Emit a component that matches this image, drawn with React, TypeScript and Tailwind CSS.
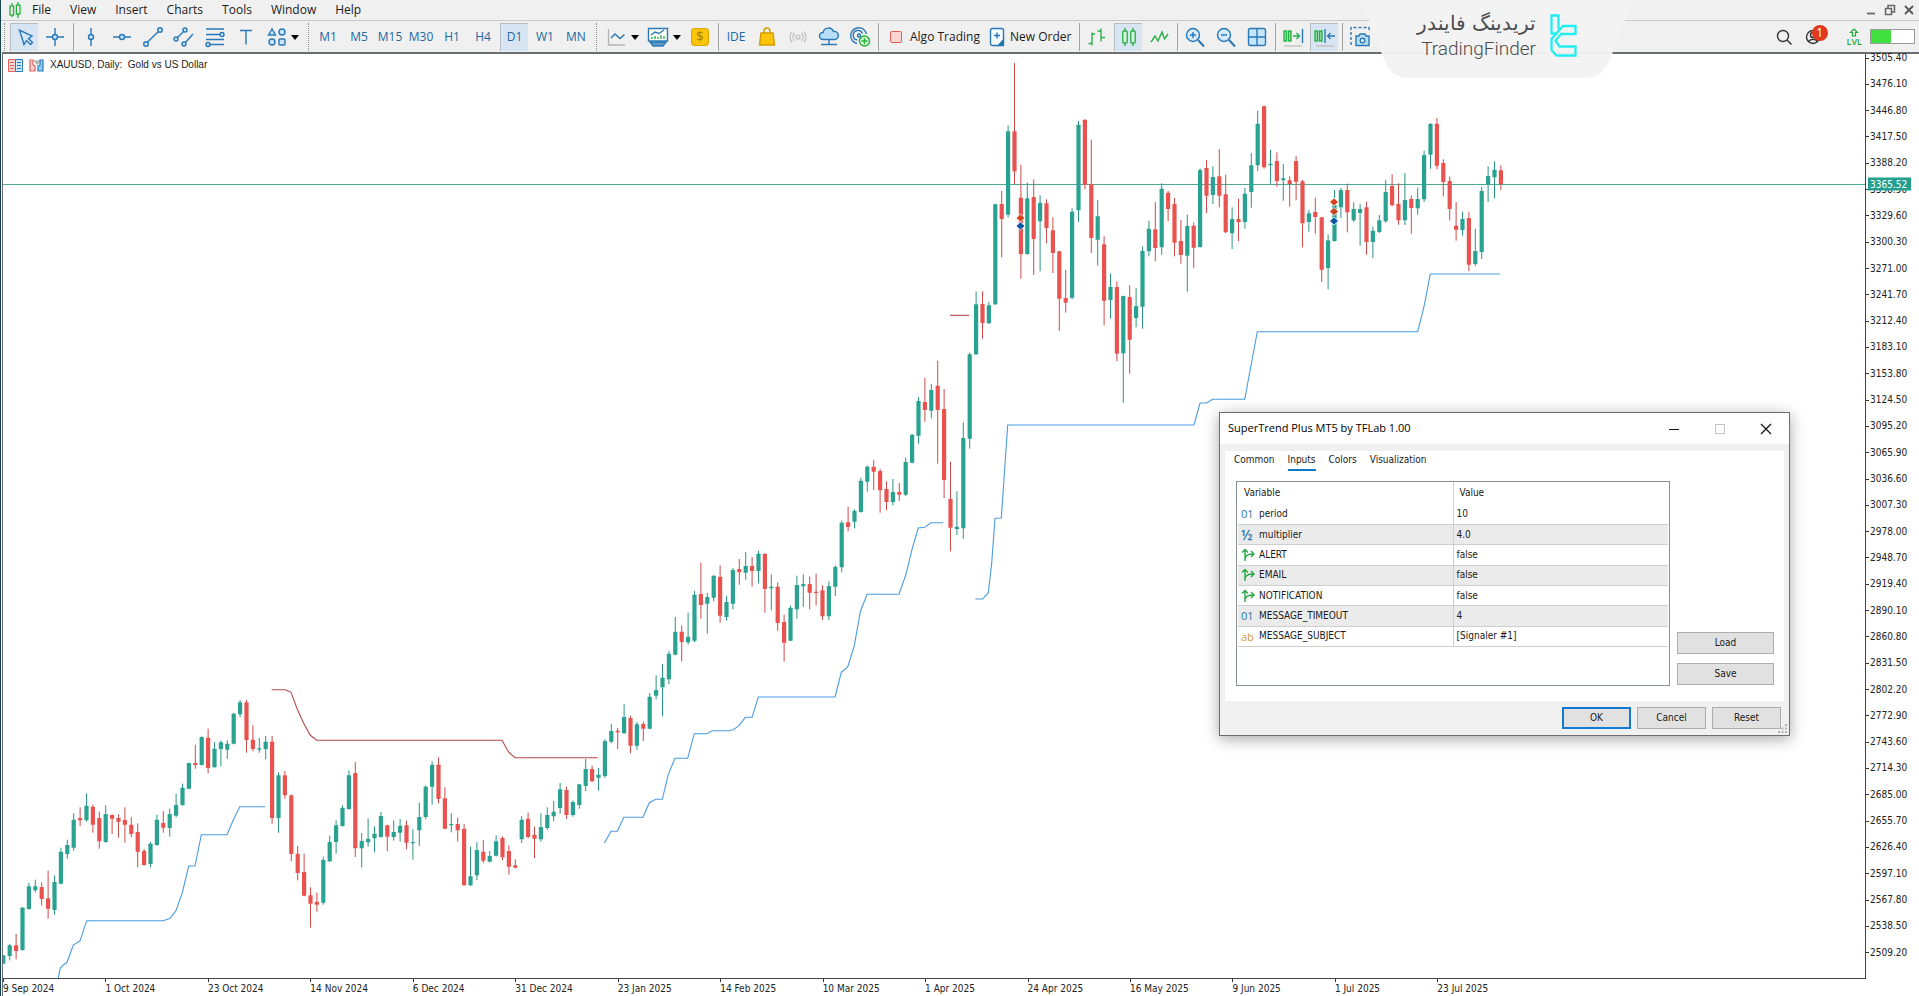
import React from "react";

type Bar = ["G" | "R", number, number, number, number];
type Run = { base: number; bars: Bar[] };

/* Candles from left to right, in thirds of a pixel below each run's base: direction, high, body top, body bottom, low. */
const runs: Run[] = [
  {
    base: 680,
    bars: [
      ["G", 826, 826, 851, 851], ["G", 792, 796, 828, 841], ["R", 762, 796, 813, 838], ["G", 681, 683, 810, 812],
      ["G", 609, 619, 687, 689], ["G", 599, 619, 631, 637], ["R", 607, 621, 657, 677], ["R", 572, 655, 686, 716],
      ["G", 586, 606, 690, 704], ["G", 503, 515, 611, 613], ["G", 479, 495, 522, 536], ["G", 400, 419, 503, 512],
      ["R", 382, 414, 421, 438], ["G", 340, 377, 421, 425], ["R", 374, 380, 434, 458], ["R", 395, 414, 484, 506],
      ["G", 376, 402, 486, 488], ["R", 403, 405, 416, 462], ["R", 403, 414, 425, 473], ["R", 382, 420, 434, 488],
      ["R", 412, 434, 462, 471], ["R", 430, 456, 515, 562], ["R", 507, 513, 555, 557], ["G", 486, 491, 552, 562],
      ["G", 404, 419, 495, 497], ["R", 393, 429, 443, 458], ["G", 386, 402, 444, 470], ["G", 341, 375, 407, 412],
      ["G", 311, 323, 375, 377], ["G", 248, 249, 326, 328], ["R", 194, 249, 255, 266], ["G", 169, 171, 255, 256],
      ["R", 146, 173, 264, 279], ["G", 186, 206, 262, 263], ["G", 182, 187, 207, 259], ["G", 181, 191, 209, 236],
      ["G", 99, 101, 191, 193], ["G", 60, 67, 103, 111], ["R", 60, 67, 180, 218], ["R", 136, 179, 207, 214],
      ["G", 174, 205, 209, 218], ["G", 168, 185, 207, 238], ["R", 168, 185, 414, 431], ["G", 277, 286, 414, 458],
      ["R", 273, 286, 346, 356], ["R", 343, 346, 522, 544], ["R", 498, 521, 579, 601], ["R", 521, 576, 647, 649],
      ["R", 622, 646, 671, 743], ["R", 638, 665, 674, 695], ["G", 530, 540, 668, 674], ["G", 467, 486, 544, 546],
      ["G", 421, 436, 486, 521], ["G", 376, 383, 438, 440], ["G", 271, 286, 387, 389], ["R", 246, 279, 505, 531],
      ["G", 459, 483, 505, 562], ["G", 415, 476, 487, 500], ["G", 439, 461, 475, 517], ["G", 396, 408, 471, 473],
      ["R", 434, 436, 470, 514], ["G", 421, 456, 471, 482], ["G", 417, 437, 458, 485], ["R", 422, 436, 488, 508],
      ["G", 448, 486, 490, 539], ["G", 368, 411, 451, 498], ["G", 316, 320, 411, 418], ["G", 244, 254, 320, 374],
      ["R", 232, 254, 357, 370], ["R", 322, 355, 446, 448], ["G", 400, 432, 436, 457], ["R", 413, 432, 451, 485],
      ["R", 432, 446, 616, 617], ["G", 500, 589, 616, 618], ["G", 486, 510, 586, 600], ["R", 480, 515, 542, 549],
      ["G", 513, 528, 545, 547], ["G", 466, 484, 527, 529], ["R", 469, 474, 532, 541], ["R", 496, 513, 560, 584],
      ["R", 538, 556, 563, 565], ["G", 409, 419, 478, 489], ["R", 398, 416, 471, 475], ["R", 440, 464, 476, 534],
      ["G", 400, 441, 478, 485], ["G", 382, 405, 444, 450], ["G", 363, 395, 409, 424], ["G", 309, 328, 384, 401],
      ["R", 320, 330, 405, 417], ["G", 361, 366, 405, 410], ["G", 312, 313, 375, 386], ["G", 237, 267, 318, 333],
      ["R", 257, 267, 304, 306], ["G", 264, 284, 293, 332], ["G", 178, 183, 288, 294], ["G", 131, 153, 185, 190],
      ["R", 144, 152, 157, 207], ["G", 72, 111, 160, 161], ["R", 107, 114, 197, 220], ["G", 126, 133, 197, 209],
      ["R", 124, 132, 146, 183], ["G", 39, 50, 146, 148],
    ],
  },
  {
    base: 480,
    bars: [
      ["G", 586, 630, 647, 658], ["G", 552, 593, 622, 709], ["G", 513, 521, 598, 613], ["G", 411, 455, 524, 526],
      ["R", 436, 455, 486, 544], ["G", 398, 470, 487, 493], ["G", 333, 344, 482, 486], ["R", 248, 342, 375, 416],
      ["G", 339, 351, 371, 461], ["G", 286, 287, 353, 364], ["R", 256, 290, 407, 428], ["G", 348, 366, 411, 422],
      ["G", 264, 270, 371, 388], ["R", 237, 267, 277, 314], ["G", 216, 258, 278, 299], ["R", 231, 258, 273, 320],
      ["G", 212, 221, 273, 310], ["R", 220, 221, 327, 398], ["G", 283, 320, 325, 391], ["R", 307, 320, 429, 452],
      ["R", 404, 426, 488, 545], ["G", 377, 383, 482, 483], ["G", 287, 315, 388, 416], ["G", 283, 312, 319, 380],
      ["R", 290, 312, 338, 388], ["R", 281, 335, 339, 376], ["R", 316, 331, 409, 420], ["G", 304, 318, 409, 420],
      ["G", 256, 261, 320, 348], ["G", 122, 128, 262, 277], ["R", 80, 127, 141, 154], ["G", 88, 93, 125, 145],
    ],
  },
  {
    base: 300,
    bars: [
      ["G", 533, 542, 636, 638], ["G", 496, 500, 545, 575], ["R", 480, 500, 515, 570], ["R", 507, 513, 571, 638],
      ["R", 544, 567, 606, 630], ["G", 537, 576, 606, 616], ["R", 549, 576, 584, 603], ["G", 473, 486, 584, 588],
      ["G", 402, 404, 488, 490], ["G", 291, 303, 407, 431], ["R", 234, 306, 330, 365], ["G", 252, 270, 332, 355],
      ["R", 182, 257, 330, 491], ["R", 267, 327, 540, 594], ["R", 486, 597, 683, 754], ["G", 574, 680, 687, 705],
      ["G", 367, 414, 685, 716], ["G", 158, 163, 416, 446],
    ],
  },
  {
    base: 50,
    bars: [
      ["G", 724, 763, 913, 915], ["R", 724, 762, 819, 866], ["G", 756, 766, 820, 822], ["G", 461, 463, 763, 765],
      ["R", 423, 462, 507, 622], ["G", 226, 244, 494, 502], ["R", 39, 244, 364, 402], ["R", 344, 443, 612, 686],
      ["G", 398, 445, 612, 614], ["R", 388, 441, 567, 675], ["G", 436, 458, 514, 664], ["R", 448, 460, 534, 580],
      ["R", 502, 541, 609, 669], ["R", 603, 604, 746, 843], ["R", 660, 744, 758, 788], ["G", 475, 485, 743, 747],
      ["G", 213, 224, 481, 516], ["R", 208, 209, 404, 418], ["R", 269, 402, 564, 609], ["G", 450, 499, 569, 647],
      ["R", 559, 583, 752, 826], ["G", 670, 711, 750, 806], ["R", 694, 711, 911, 934], ["G", 737, 738, 910, 1058],
      ["R", 706, 741, 869, 971], ["G", 714, 768, 804, 832], ["G", 589, 603, 770, 836], ["G", 512, 536, 604, 619],
      ["R", 456, 538, 594, 634], ["G", 400, 416, 592, 614], ["R", 423, 428, 477, 513], ["R", 444, 462, 578, 619],
      ["R", 510, 573, 615, 641], ["G", 494, 528, 617, 725], ["R", 517, 527, 593, 654], ["G", 355, 360, 591, 593],
      ["R", 330, 354, 437, 489], ["G", 349, 381, 435, 462], ["R", 297, 379, 437, 472], ["R", 374, 433, 547, 549],
      ["G", 472, 507, 550, 597], ["R", 446, 507, 516, 573], ["G", 414, 431, 516, 536], ["G", 310, 346, 426, 473],
    ],
  },
  {
    base: 90,
    bars: [
      ["G", 62, 101, 226, 243], ["R", 47, 49, 232, 236], ["G", 180, 221, 226, 281], ["R", 187, 213, 273, 290],
      ["G", 222, 265, 271, 332], ["R", 259, 271, 282, 350], ["R", 198, 213, 275, 331], ["R", 270, 274, 400, 472],
      ["G", 360, 370, 396, 425], ["R", 323, 366, 381, 431], ["R", 381, 382, 539, 576], ["G", 433, 451, 534, 598],
      ["G", 300, 345, 453, 455], ["G", 294, 300, 352, 384], ["R", 281, 300, 367, 427], ["G", 337, 357, 391, 396],
      ["G", 342, 357, 369, 467], ["R", 335, 352, 456, 494], ["G", 411, 422, 456, 504], ["G", 375, 391, 426, 429],
      ["G", 270, 306, 394, 398], ["R", 253, 288, 346, 349], ["R", 280, 342, 391, 404], ["G", 249, 330, 391, 405],
      ["R", 316, 327, 354, 431], ["G", 293, 327, 355, 374], ["G", 182, 195, 328, 336], ["G", 99, 102, 194, 236],
      ["R", 84, 101, 227, 238], ["R", 208, 219, 276, 319], ["R", 259, 273, 357, 391], ["R", 336, 407, 419, 452],
      ["G", 365, 387, 420, 437], ["R", 365, 384, 524, 544], ["G", 416, 483, 522, 528], ["G", 291, 303, 486, 507],
      ["G", 229, 258, 282, 336], ["G", 214, 239, 262, 325], ["R", 226, 241, 282, 301],
    ],
  },
];

const candles = runs.flatMap((run) =>
  run.bars.map(([dir, ...ys]) => ({ dir, ys: ys.map((v) => run.base + v / 3) })),
);

const upTrend = [
  "58.3,978 60.3,968 63.7,964.7 67,962.3 73.3,945 80,941 86.7,920.7 163.3,920.7 170,918.3 176,910.7 182.3,892.7 188.7,866 195,866 201.3,834.7 227,834.7 233.3,820 239.7,806.7 265,806.7",
  "604.3,843.3 611,831.3 617.3,831.3 623.7,817.3 643,817.3 649.3,802.7 655.7,799.3 662.3,799.3 668.3,774.3 675,758.3 687.7,758.3 694.3,733.7 706.7,733.7 712.3,730.7 728.3,730.7 733.3,729.7 739,725.7 745.3,717.3 752,717.3 758.3,697 835,697 841.3,672.3 847.7,667 854.3,645.7 860.3,611.7 867,594.3 899,594.3 905.7,575.3 912,549.3 918.3,528 924.7,527.3 931,522.7 943.3,522.7",
  "975.3,599 982.7,599 988.3,592.7 991.7,563.3 995,518.3 1001.3,518 1007.7,425 1194,425 1200,403 1206.5,403 1212.7,399.3 1244.7,399.3 1257.3,331.7 1417.7,331.7 1424,306.7 1430.3,274 1500,274",
];
const downTrend = [
  "271.7,689.7 285.3,689.7 291,692.3 297.3,709.3 303.7,723.3 310.3,735.3 316.7,740.3 502,740.3 508.3,751.7 515,757.7 597.7,757.7",
  "950,315.3 969,315.3",
];
const signals = [
  { x: 1020.5, y: 218, c: "#d8431c" },
  { x: 1020.5, y: 226, c: "#0a56a4" },
  { x: 1334, y: 202, c: "#d8431c" },
  { x: 1334, y: 211.5, c: "#c8401c" },
  { x: 1334, y: 221, c: "#0a56a4" },
];
const prices = Array.from({ length: 35 }, (_, i) => (3505.4 - i * 29.3).toFixed(2));
const dates = [
  "9 Sep 2024", "1 Oct 2024", "23 Oct 2024", "14 Nov 2024", "6 Dec 2024", "31 Dec 2024", "23 Jan 2025", "14 Feb 2025",
  "10 Mar 2025", "1 Apr 2025", "24 Apr 2025", "16 May 2025", "9 Jun 2025", "1 Jul 2025", "23 Jul 2025",
];

function Icon({ children, w = 22, h = 22, stroke = "#2a78b5", sw = 1.4, fill = "none" }: {
  children: React.ReactNode; w?: number; h?: number; stroke?: string; sw?: number; fill?: string;
}) {
  return (
    <svg width={w} height={h} viewBox={`0 0 ${w} ${h}`} fill={fill} stroke={stroke} strokeWidth={sw} className="shrink-0" aria-hidden="true">
      {children}
    </svg>
  );
}

function Tool({ label, active, wide, children }: { label: string; active?: boolean; wide?: boolean; children: React.ReactNode }) {
  return (
    <button
      type="button"
      aria-label={label}
      className={`flex h-7 shrink-0 items-center justify-center ${wide ? "w-[39px]" : "w-7"} ${active ? "border-l border-t border-[#b4bcc6] bg-[#d7e4f2]" : ""}`}
    >
      {children}
    </button>
  );
}

const Sep = () => <span className="h-7 w-[2px] shrink-0 border-r border-[#a3a3a3]" />;
const Grip = () => <span className="mx-[2px] h-7 w-[2px] shrink-0 border-r border-dotted border-[#909090]" />;
const Caret = () => (
  <svg width="8" height="5" viewBox="0 0 8 5" className="ml-1 mt-[2px] shrink-0" aria-hidden="true">
    <path d="M0 0h8L4 5z" fill="#000" />
  </svg>
);

const frames = ["M1", "M5", "M15", "M30", "H1", "H4", "D1", "W1", "MN"];

function Toolbar() {
  return (
    <div className="flex h-8 items-center gap-[3px] border-t border-[#c9c9c9] pr-1">
      <Grip />
      <Tool label="Cursor" active>
        <Icon><path d="M5.500 4l4.500 14.500 2.500-4 4 4 2-2-4-4 3.500-2.500z" fill="#d4eafa" /></Icon>
      </Tool>
      <Tool label="Crosshair">
        <Icon><path d="M11 2v6M11 14v6M2 11h6M14 11h6" /><circle cx="11" cy="11" r="2.500" fill="#c9e6fb" /></Icon>
      </Tool>
      <Sep />
      <Tool label="Vertical line">
        <Icon><path d="M11 2v6M11 14v6" /><circle cx="11" cy="11" r="2.500" fill="#c9e6fb" /></Icon>
      </Tool>
      <Tool label="Horizontal line">
        <Icon><path d="M2 11h6M14 11h6" /><circle cx="11" cy="11" r="2.500" fill="#c9e6fb" /></Icon>
      </Tool>
      <Tool label="Trend line">
        <Icon><path d="M5 16.500L17 5" /><circle cx="4" cy="18" r="2.300" fill="#c9e6fb" /><circle cx="18" cy="4" r="2.300" fill="#c9e6fb" /></Icon>
      </Tool>
      <Tool label="Channel">
        <Icon><path d="M3 13L11 5M12 17L20 8" /><circle cx="3" cy="13" r="2" fill="#c9e6fb" /><circle cx="12" cy="4" r="2" fill="#c9e6fb" /><circle cx="11" cy="18" r="2" fill="#c9e6fb" /></Icon>
      </Tool>
      <Tool label="Fibonacci">
        <Icon><path d="M2 3h18M2 8.500h14M2 13.500h18M6 18.500h14" /><circle cx="18" cy="8.500" r="2" fill="#c9e6fb" /><circle cx="4" cy="18.500" r="2" fill="#c9e6fb" /></Icon>
      </Tool>
      <Tool label="Text">
        <Icon><path d="M5 4.500h12M11 4.500v14" /></Icon>
      </Tool>
      <Tool label="Shapes" wide>
        <Icon w={20}>
          <path d="M5 3L1.500 9h7z" fill="#c9e6fb" /><circle cx="15" cy="6" r="3" fill="#c9e6fb" />
          <circle cx="5" cy="16" r="3" fill="#c9e6fb" /><rect x="12" y="13" width="6" height="6" rx="1" fill="#c9e6fb" />
        </Icon>
        <Caret />
      </Tool>
      <Grip />
      {frames.map((f) => (
        <button
          key={f}
          type="button"
          className={`flex h-7 w-7 shrink-0 items-center justify-center whitespace-nowrap text-[12px] text-[#1c689f] ${f === "D1" ? "border-l border-t border-[#b4bcc6] bg-[#d7e4f2]" : ""}`}
        >
          {f}
        </button>
      ))}
      <Grip />
      <Tool label="Chart type" wide>
        <Icon><path d="M3.500 3v16H20" stroke="#b5b5b5" /><path d="M6 12l4-4 5 4.500 4.500-4" /></Icon>
        <Caret />
      </Tool>
      <Tool label="Templates" wide>
        <Icon>
          <path d="M1.500 2.500h19V15h-19z" fill="#fff" /><path d="M3 16h16l-3 4H6z" fill="#5d9cc9" />
          <path d="M4 9l4-3 4 1.500 5-3.500" /><path d="M5 13v-2M8 13v-3M11 13v-2M14 13v-4M17 13v-3" stroke="#34b34a" />
        </Icon>
        <Caret />
      </Tool>
      <Tool label="Symbols">
        <span className="flex h-[18px] w-[18px] items-center justify-center rounded-[3px] border border-[#dca600] bg-[#fcc50c] text-[13px] leading-none text-[#a87500]">$</span>
      </Tool>
      <Sep />
      <Tool label="IDE"><span className="text-[12px] text-[#1c689f]">IDE</span></Tool>
      <Tool label="Market">
        <Icon stroke="#d59b00"><path d="M8 8V5a3 3 0 016 0v3" /><path d="M5 7h12l1.500 12h-15z" fill="#fcc50c" /></Icon>
      </Tool>
      <Tool label="Signals">
        <Icon stroke="#b9b9b9" sw={1.2}>
          <circle cx="11" cy="11" r="2" /><path d="M7.500 7a6 6 0 000 8M14.500 7a6 6 0 010 8M5 5.500a9 9 0 000 11M17 5.500a9 9 0 010 11" />
        </Icon>
      </Tool>
      <Tool label="Cloud">
        <Icon><path d="M5 13.500a3.500 3.500 0 010-7 5.500 5.500 0 0110.500-1 4 4 0 011.500 8z" fill="#b9e0fb" /><path d="M11 14v4M3 18.500h16M8.500 18.500h5" /></Icon>
      </Tool>
      <Tool label="Community">
        <Icon>
          <path d="M8 17.500A8 8 0 1117.500 8M8.500 14a4.800 4.800 0 115-6.500" /><circle cx="10" cy="9.500" r="1.500" />
          <circle cx="15.500" cy="15" r="5" fill="#d9f7dd" stroke="#25b03a" /><path d="M15.500 12v6M12.500 15h6" stroke="#25b03a" />
        </Icon>
      </Tool>
      <Sep />
      <button type="button" className="flex h-7 w-[102px] shrink-0 items-center gap-2 whitespace-nowrap pl-2 text-[12px] text-[#1b1b1b]">
        <span className="h-3 w-3 shrink-0 rounded-[2px] border border-[#e2605a] bg-[#fbd5d2]" />
        Algo Trading
      </button>
      <button type="button" className="flex h-7 w-[88px] shrink-0 items-center gap-[5px] whitespace-nowrap pl-[2px] text-[12px] text-[#1b1b1b]">
        <Icon w={16} h={20}><path d="M3.500 1.500h9a2 2 0 012 2V13l-5 5.500h-6a2 2 0 01-2-2v-13a2 2 0 012-2z" fill="#f4faff" /><path d="M14.500 13v5.500h-5z" fill="#1c689f" /><path d="M8 5.500v6M5 8.500h6" /></Icon>
        New Order
      </button>
      <Sep />
      <Tool label="Bar chart">
        <Icon stroke="#2bb04a"><path d="M6 6.500v13M2.500 17.500H6M6 8h3M15 2.500v13M11.500 5H15M15 11.500h4" /></Icon>
      </Tool>
      <Tool label="Candlesticks" active>
        <Icon stroke="#2bb04a"><path d="M7 2v3M7 17v3M15 2v3M15 17v3" /><rect x="4.800" y="5" width="4.400" height="12" rx="1" fill="#d8f5dd" /><rect x="12.800" y="5" width="4.400" height="12" rx="1" fill="#d8f5dd" /></Icon>
      </Tool>
      <Tool label="Line chart">
        <Icon stroke="#2bb04a"><path d="M3 16l4-6 3 5 4-9 2.500 7L20 8" /></Icon>
      </Tool>
      <Sep />
      <Tool label="Zoom in">
        <Icon><path d="M14 14l6 6.500" strokeWidth="2" /><circle cx="9" cy="9" r="6.500" fill="#d3ebfc" /><path d="M9 6v6M6 9h6" /></Icon>
      </Tool>
      <Tool label="Zoom out">
        <Icon><path d="M14 14l6 6.500" strokeWidth="2" /><circle cx="9" cy="9" r="6.500" fill="#d3ebfc" /><path d="M6 9h6" /></Icon>
      </Tool>
      <Tool label="Tile windows">
        <Icon><rect x="2.500" y="2.500" width="17" height="17" rx="2" fill="#c5e5fb" /><path d="M11 2.500v17M2.500 11h17" /></Icon>
      </Tool>
      <Sep />
      <Tool label="Auto scroll">
        <Icon stroke="#2bb04a"><rect x="2" y="5" width="2.500" height="10" fill="#9be0a8" /><rect x="6.500" y="5" width="2.500" height="10" fill="#9be0a8" /><path d="M11 10h6M14.500 7l3 3-3 3" /><path d="M20.500 3v14" stroke="#2a78b5" /><path d="M2 20h18" stroke="#c0c0c0" /></Icon>
      </Tool>
      <Tool label="Chart shift" active>
        <Icon stroke="#2bb04a"><rect x="1" y="5" width="2.500" height="10" fill="#9be0a8" /><rect x="5.500" y="5" width="2.500" height="10" fill="#9be0a8" /><path d="M11 3v14M21 10h-7M16.500 7l-3 3 3 3" stroke="#2a78b5" /><path d="M2 20h18" stroke="#c0c0c0" /></Icon>
      </Tool>
      <Sep />
      <Tool label="Screenshot">
        <Icon><path d="M2 19V1.500h18V6" strokeDasharray="3 2" /><path d="M7 10h3l1-2h5l1 2h3v9.500H7z" fill="#b9e0fb" /><circle cx="13.500" cy="14.500" r="2.300" fill="#fff" /></Icon>
      </Tool>

      <div className="ml-auto flex shrink-0 items-center">
        <button type="button" aria-label="Search" className="mr-3 flex">
          <Icon w={18} h={18} stroke="#333"><circle cx="8" cy="8" r="5.500" /><path d="M12 12l4.500 4.500" /></Icon>
        </button>
        <button type="button" aria-label="Notifications" className="relative mr-4 flex w-[26px]">
          <Icon w={18} h={18} stroke="#333"><circle cx="8" cy="9" r="6.500" /><circle cx="8" cy="7" r="2.500" /><path d="M3.500 13.500c2-3 7-3 9 0" /></Icon>
          <span className="absolute -top-[3px] left-[7px] flex h-4 w-4 items-center justify-center rounded-full bg-[#e03a1e] text-[12px] leading-none text-white">1</span>
        </button>
        <span className="mr-2 flex flex-col items-center text-[#1fa83a]">
          <svg width="10" height="9" viewBox="0 0 10 9" fill="none" stroke="#1fa83a" strokeWidth="1.200" aria-hidden="true">
            <path d="M5 1l3.500 3.500h-2V8h-3V4.500h-2z" />
          </svg>
          <span className="text-[9px] font-semibold leading-[9px]">LVL</span>
        </span>
        <span className="flex h-[15px] w-[45px] border border-[#9a9a9a] bg-white">
          <span className="w-[20px] bg-[#3fe03f]" />
        </span>
      </div>
    </div>
  );
}

function Brand() {
  return (
    <div className="absolute left-[1358px] top-0 h-[78px] w-[276px]">
      <svg width="276" height="78" viewBox="0 0 276 78" className="absolute inset-0" aria-hidden="true">
        <path d="M0 0H276C268 14 262 28 256 46C249 66 244 78 226 78H50C32 78 27 66 20 46C14 28 8 14 0 0Z" fill="#f3f3f3" fillOpacity=".96" />
      </svg>
      <div className="relative flex items-start gap-[14px] pl-[61px] pt-[10px]">
        <div className="flex w-[116px] flex-col items-end text-[#4c4c4c]">
          <span dir="rtl" className="whitespace-nowrap font-['DejaVu_Sans',sans-serif] text-[20px] font-extralight leading-[26px]">تریدینگ فایندر</span>
          <span className="whitespace-nowrap font-['Roboto',sans-serif] text-[19px] font-light leading-[26px]">TradingFinder</span>
        </div>
        <svg width="27" height="43" viewBox="0 0 27 43" fill="none" stroke="#22eef2" strokeWidth="2.300" className="mt-1" aria-hidden="true">
          <path d="M8.500 15V1.500h-7V19.500h6.500" />
          <path d="M11 20h14.500v-8H13L1.500 25v11l5 5.500h19V32.500H9.500L5.500 26.500L12 19" />
        </svg>
      </div>
    </div>
  );
}

function Chart() {
  return (
    <svg viewBox="3 54 1862 924" preserveAspectRatio="none" className="absolute inset-0 h-full w-full" role="img" aria-label="XAUUSD daily candlestick chart">
      <path d="M3 184.500H1865" stroke="#4fa897" strokeWidth="1" />
      {upTrend.map((p) => <polyline key={p} points={p} fill="none" stroke="#4a9be0" strokeWidth="1.100" />)}
      {downTrend.map((p) => <polyline key={p} points={p} fill="none" stroke="#b84a4e" strokeWidth="1.100" />)}
      {candles.map(({ dir, ys: [high, top, bottom, low] }, i) => {
        const x = 3.3 + 6.4 * i;
        const up = dir === "G";
        return (
          <g key={i}>
            <rect x={x - 0.5} y={high} width="1" height={low - high} fill={up ? "#2b9584" : "#cf4a49"} />
            <rect x={x - 2.1} y={top} width="4.200" height={Math.max(bottom - top, 1)} rx=".5" fill={up ? "#2aa292" : "#e8534f"} />
          </g>
        );
      })}
      {signals.map((s) => (
        <path key={`${s.x}-${s.y}`} d={`M${s.x} ${s.y - 4}l4.500 4l-4.500 4l-4.500 -4z`} fill={s.c} stroke="#fff" strokeWidth=".8" />
      ))}
    </svg>
  );
}

const TypeInt = () => <span className="text-[11px] text-[#2a78b5]">01</span>;
const TypeDouble = () => <span className="text-[14px] font-semibold text-[#2a78b5]">½</span>;
const TypeString = () => <span className="text-[11px] text-[#d39a2b]">ab</span>;
const TypeBool = () => (
  <svg width="14" height="14" viewBox="0 0 14 14" fill="none" stroke="#27a844" strokeWidth="1.400" aria-hidden="true">
    <path d="M4 13V1.500M1 4.500l3-3 3 3M4 11c0-4 3-5 8.500-5M10 3l3 3-3 3" />
  </svg>
);

const rows: [React.ReactNode, string, string][] = [
  [<TypeInt />, "period", "10"],
  [<TypeDouble />, "multiplier", "4.0"],
  [<TypeBool />, "ALERT", "false"],
  [<TypeBool />, "EMAIL", "false"],
  [<TypeBool />, "NOTIFICATION", "false"],
  [<TypeInt />, "MESSAGE_TIMEOUT", "4"],
  [<TypeString />, "MESSAGE_SUBJECT", "[Signaler #1]"],
];

function Dialog() {
  const btn = "h-[22px] border border-[#adadad] bg-[#e1e1e1] leading-none";
  return (
    <section
      aria-label="SuperTrend Plus MT5 by TFLab 1.00"
      className="absolute left-[1218px] top-[412px] w-[571px] border border-[#6e6e6e] bg-[#f0f0f0] font-['DejaVu_Sans_Condensed','DejaVu_Sans',sans-serif] text-[10px] text-[#1a1a1a] shadow-[0_3px_14px_rgba(0,0,0,0.35)]"
    >
      <header className="flex h-[31px] items-center bg-white pl-2 pr-[17px] font-['Open_Sans','Noto_Sans',sans-serif]">
        <h2 className="text-[11px] text-black">SuperTrend Plus MT5 by TFLab 1.00</h2>
        <div className="ml-auto flex items-center gap-[34px]">
          <button type="button" aria-label="Minimize" className="flex"><Icon w={12} h={12} stroke="#111" sw={1}><path d="M1 6.500h10" /></Icon></button>
          <button type="button" aria-label="Maximize" className="flex"><Icon w={12} h={12} stroke="#c4c4c4" sw={1}><rect x="1.500" y="1.500" width="9" height="9" /></Icon></button>
          <button type="button" aria-label="Close" className="flex"><Icon w={12} h={12} stroke="#111" sw={1.2}><path d="M1 1l10 10M11 1L1 11" /></Icon></button>
        </div>
      </header>
      <div className="mx-[5px] mt-[7px] h-[250px] bg-white px-[9px]">
        <nav role="tablist" className="flex gap-[13px] leading-4">
          {["Common", "Inputs", "Colors", "Visualization"].map((t) => (
            <button
              key={t}
              type="button"
              role="tab"
              aria-selected={t === "Inputs"}
              className={`h-5 border-b-2 ${t === "Inputs" ? "border-[#0b78c4]" : "border-transparent"}`}
            >
              {t}
            </button>
          ))}
        </nav>
        <div className="flex items-stretch pl-[2px] pt-[10px]">
          <div className="h-[205px] w-[434px] shrink-0 border border-[#8b9096] px-[1px]">
            <table className="h-[165px] w-full table-fixed border-collapse text-left">
              <thead>
                <tr className="h-[22px]">
                  <th scope="col" className="w-[215px] border-r border-[#d4d4d4] p-0 pl-[6px] font-normal leading-3">Variable</th>
                  <th scope="col" className="p-0 pl-[6px] font-normal leading-3">Value</th>
                </tr>
              </thead>
              <tbody>
                {rows.map(([icon, name, value], i) => (
                  <tr key={name} className={`h-5 border-b border-[#cfcfcf] ${i % 2 ? "bg-[#ebebeb]" : ""}`}>
                    <td className="border-r border-[#cfcfcf] p-0">
                      <div className="flex h-4 items-center gap-1 pl-[3px] leading-none">
                        <span className="flex w-[14px] justify-start font-['Open_Sans','Noto_Sans',sans-serif] leading-none">{icon}</span>
                        {name}
                      </div>
                    </td>
                    <td className="p-0 pl-[3px] leading-3">{value}</td>
                  </tr>
                ))}
              </tbody>
            </table>
          </div>
          <div className="ml-[7px] flex w-[97px] flex-col justify-end gap-[9px] pb-[1px]">
            <button type="button" className={btn}>Load</button>
            <button type="button" className={btn}>Save</button>
          </div>
        </div>
      </div>
      <footer className="relative flex h-[34px] items-center justify-end gap-[6px] pr-2">
        <button type="button" className="h-[22px] w-[69px] border-2 border-[#1479d0] bg-[#e1e1e1] leading-none">OK</button>
        <button type="button" className={`${btn} w-[69px]`}>Cancel</button>
        <button type="button" className={`${btn} w-[69px]`}>Reset</button>
        <svg width="10" height="10" viewBox="0 0 10 10" fill="#b3b3b3" className="absolute bottom-[1px] right-[1px]" aria-hidden="true">
          <path d="M7 0h2v2H7zM7 3.500h2v2H7zM3.500 3.500h2v2h-2zM7 7h2v2H7zM3.500 7h2v2h-2zM0 7h2v2H0z" />
        </svg>
      </footer>
    </section>
  );
}

export default function App() {
  return (
    <div className="relative flex min-h-screen flex-col overflow-hidden border-l border-[#17424e] bg-[#f0f0f0] font-['Open_Sans','Noto_Sans',sans-serif] text-[#1b1b1b]">
      <header className="flex h-5 items-center pl-2 text-[12px]">
        <svg width="12" height="16" viewBox="0 0 12 16" fill="none" stroke="#22b03a" strokeWidth="1.300" className="mr-[11px]" aria-hidden="true">
          <path d="M3 1v2M3 13v2M9 0v3M9 12v4" /><rect x="1" y="4" width="3.600" height="9" /><rect x="7.400" y="3" width="3.600" height="9" />
        </svg>
        <nav className="flex gap-[19px]">
          {["File", "View", "Insert", "Charts", "Tools", "Window", "Help"].map((m) => (
            <button key={m} type="button" className="leading-5">{m}</button>
          ))}
        </nav>
        <div className="ml-auto flex items-center gap-[7px] pr-1 text-[#555]">
          <button type="button" aria-label="Minimize window"><Icon w={12} h={12} stroke="#666" sw={1.8}><path d="M2 9.500h8" /></Icon></button>
          <button type="button" aria-label="Restore window"><Icon w={12} h={12} stroke="#666" sw={1.5}><path d="M1.500 4.500h6v6h-6zM4 4V1.500h6.500V8H8" /></Icon></button>
          <button type="button" aria-label="Close window"><Icon w={12} h={12} stroke="#555" sw={1.8}><path d="M2 2l8 8M10 2l-8 8" /></Icon></button>
        </div>
      </header>
      <Toolbar />

      <main className="ml-[1px] flex flex-1 flex-col border-l border-t-2 border-[#6b6f72] bg-white font-['DejaVu_Sans_Condensed','DejaVu_Sans',sans-serif] text-[10px] text-[#222]">
        <div className="flex flex-1">
          <div className="relative flex-1 border-b border-r border-[#444]">
            <Chart />
            <h1 className="relative flex items-center gap-[6px] pl-[5px] pt-[3px] leading-4">
              <Icon w={15} h={13} sw={1} stroke="#e0605c">
                <path d="M.5.5h7v12h-7z" fill="#fbd5d2" /><path d="M7.500.5h7v12h-7z" fill="#c9e6fb" stroke="#2a78b5" />
                <path d="M2 3.500h4M2 6.500h4M2 9.500h4" /><path d="M9 3.500h4M9 6.500h4M9 9.500h4" stroke="#2a78b5" />
              </Icon>
              <Icon w={15} h={13} sw={1.2} stroke="#e0605c">
                <path d="M1 1v11h5V7L4 6V1z" fill="#fbd5d2" /><path d="M9 12V7l2-1V1h3v11z" fill="#8fcdf7" stroke="#2a78b5" /><path d="M6 2h4l-2 3z" stroke="#999" />
              </Icon>
              <span className="whitespace-pre font-['Liberation_Sans',sans-serif]">XAUUSD, Daily:  Gold vs US Dollar</span>
            </h1>
          </div>
          <div className="relative flex w-[53px] flex-col justify-between pb-[22px]">
            {prices.map((p) => (
              <span key={p} className="flex items-center gap-[1px] leading-[8px]">
                <span className="h-px w-[3px] bg-[#333]" />
                {p}
              </span>
            ))}
            <span className="absolute left-[2px] top-[14.1%] -translate-y-1/2 bg-[#26a08e] px-[2px] pr-1 leading-[13px] text-white">3365.52</span>
          </div>
        </div>
        <div className="mr-[53px] flex h-[17px] overflow-hidden">
          {dates.map((d) => (
            <span key={d} className="flex w-[5.5%] shrink-0 flex-col whitespace-nowrap">
              <span className="h-[3px] w-px bg-[#333]" />
              <span className="leading-[13px]">{d}</span>
            </span>
          ))}
        </div>
      </main>

      <Brand />
      <Dialog />
    </div>
  );
}
